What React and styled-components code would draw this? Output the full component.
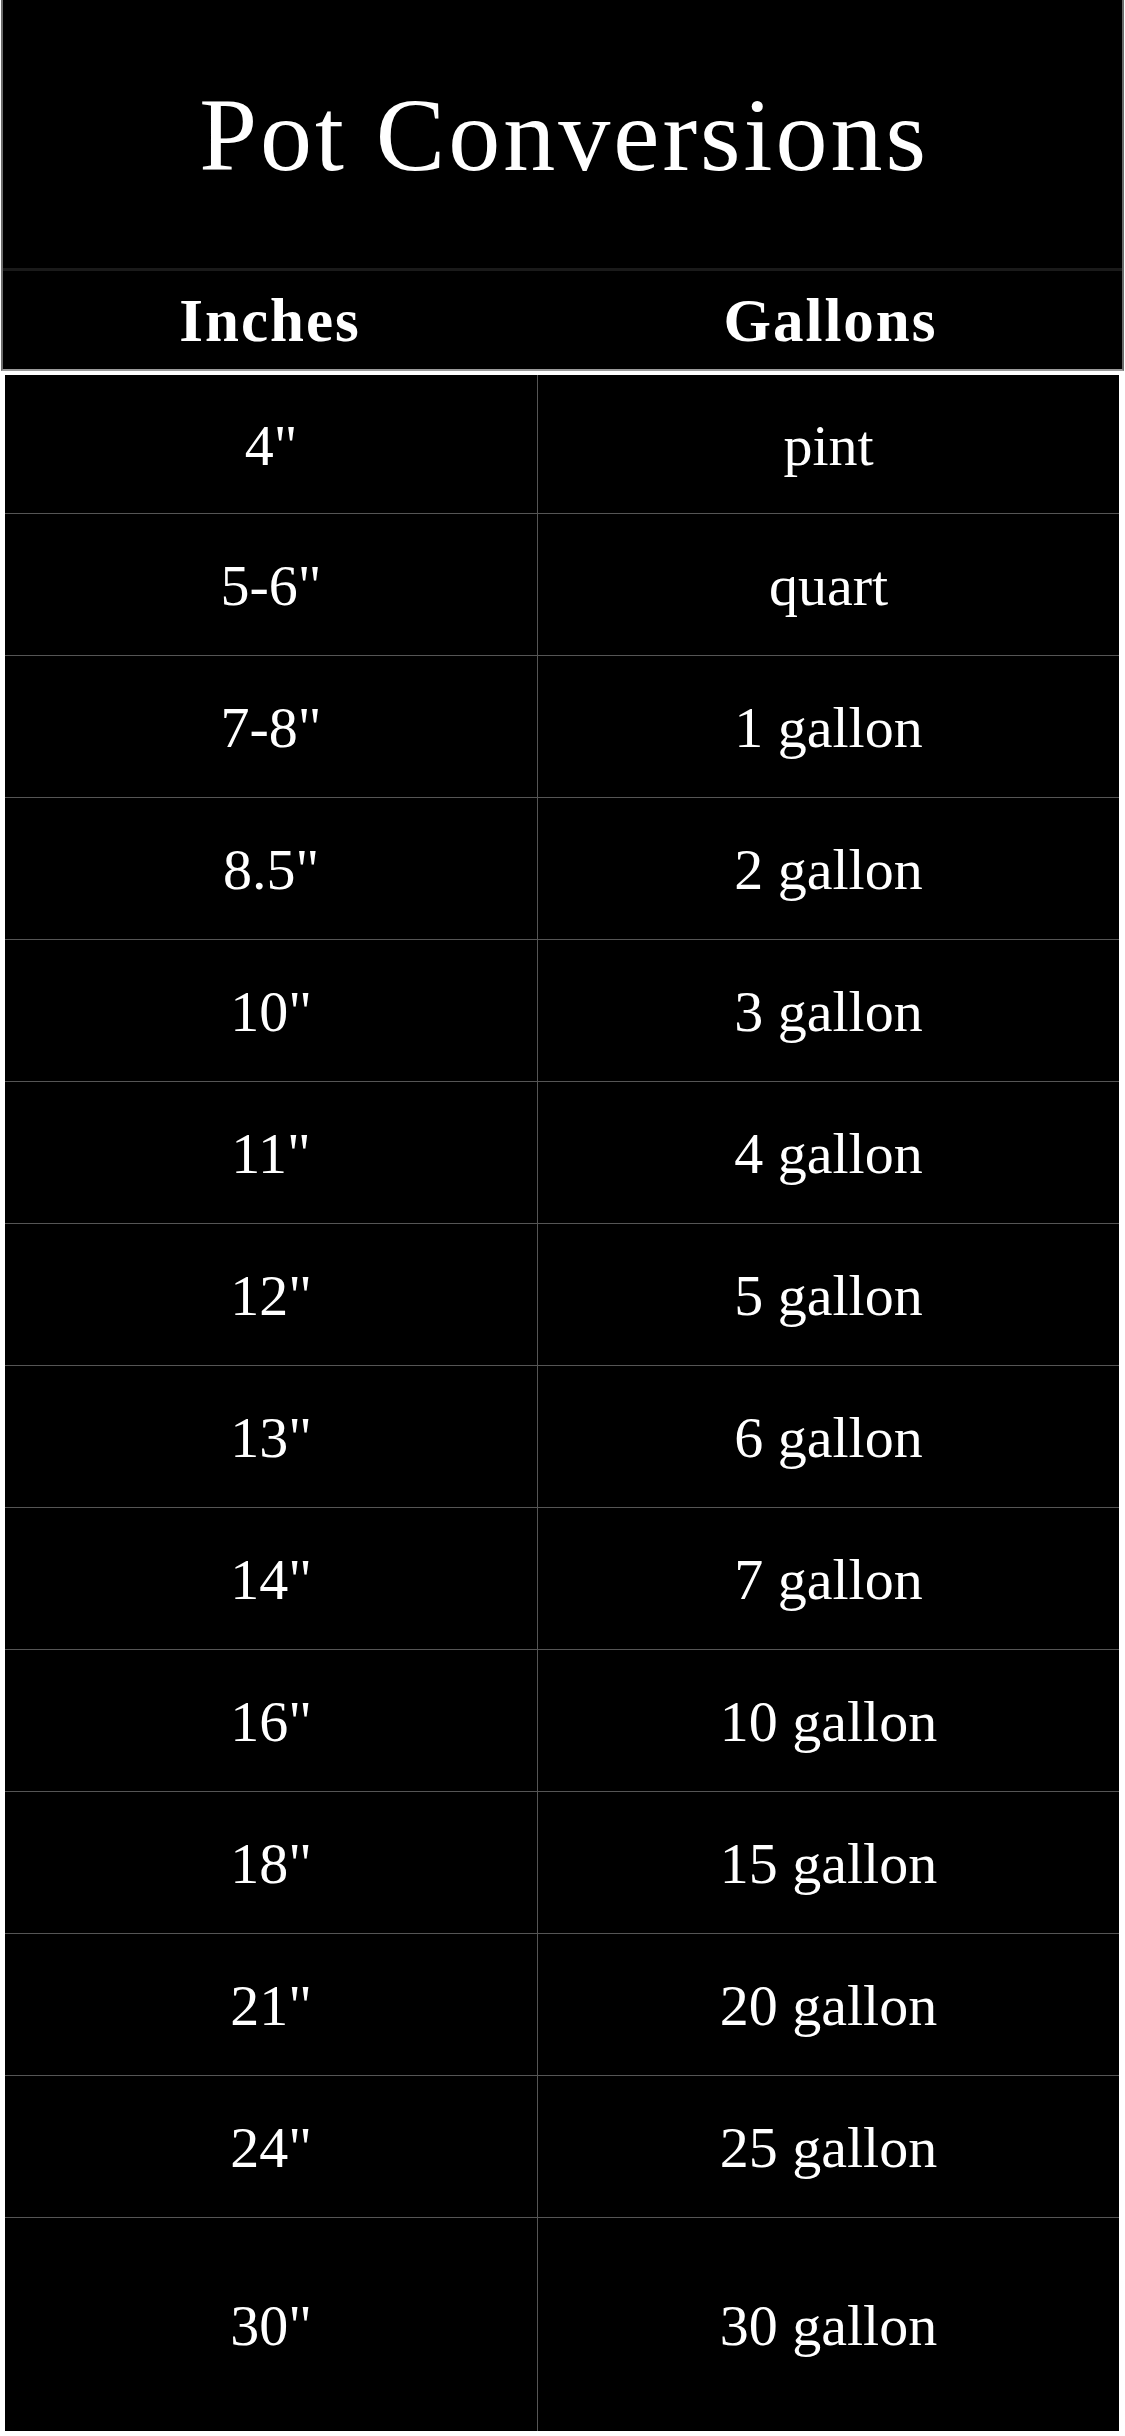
import React from "react";
import styled, { createGlobalStyle } from "styled-components";

const GlobalStyle = createGlobalStyle`
  html, body {
    margin: 0;
    padding: 0;
    background: #ffffff;
  }
  body {
    font-family: "Liberation Serif", "Times New Roman", serif;
  }
  * { box-sizing: border-box; }
`;

const Page = styled.div`
  width: 1125px;
  height: 2436px;
  background: #ffffff;
  overflow: hidden;
`;

const HeaderPanel = styled.header`
  margin: 0 1px;
  background: #000000;
  border-left: 2px solid #6c6c6c;
  border-right: 2px solid #6c6c6c;
  border-bottom: 2px solid #9a9a9a;
`;

const Title = styled.h1`
  margin: 0;
  height: 268px;
  display: flex;
  align-items: center;
  justify-content: center;
  padding: 0 0 0 3px;
  color: #ffffff;
  font-family: "Liberation Serif", "Times New Roman", serif;
  font-weight: 400;
  font-size: 104px;
  letter-spacing: 3px;
`;

const Rule = styled.div`
  height: 3px;
  background: #1a1a1a;
`;

const HeadRow = styled.div`
  display: grid;
  grid-template-columns: 534px 1fr;
  height: 98px;
`;

const HeadCell = styled.div`
  display: flex;
  align-items: center;
  justify-content: center;
  padding-top: 2px;
  color: #ffffff;
  font-family: "Liberation Serif", "Times New Roman", serif;
  font-weight: 700;
  font-size: 61px;
  letter-spacing: 2px;
  padding-left: ${(p) => (p.$right ? "2px" : "0")};
`;

const Body = styled.div`
  margin: 4px 6px 0 5px;
  background: #000000;
`;

const Row = styled.div`
  display: grid;
  grid-template-columns: 533px 1fr;
  height: ${(p) => p.$h}px;
  border-top: ${(p) => (p.$first ? "none" : "1px solid #555555")};
`;

const Cell = styled.div`
  display: flex;
  align-items: center;
  justify-content: center;
  color: #ffffff;
  font-family: "Liberation Serif", "Times New Roman", serif;
  font-size: 58px;
  border-right: ${(p) => (p.$divider ? "1px solid #555555" : "none")};
  padding-top: 2px;
`;

const rows = [
  ['4"', "pint"],
  ['5-6"', "quart"],
  ['7-8"', "1 gallon"],
  ['8.5"', "2 gallon"],
  ['10"', "3 gallon"],
  ['11"', "4 gallon"],
  ['12"', "5 gallon"],
  ['13"', "6 gallon"],
  ['14"', "7 gallon"],
  ['16"', "10 gallon"],
  ['18"', "15 gallon"],
  ['21"', "20 gallon"],
  ['24"', "25 gallon"],
  ['30"', "30 gallon"],
];

export default function App() {
  return (
    <Page>
      <GlobalStyle />
      <HeaderPanel>
        <Title>Pot Conversions</Title>
        <Rule />
        <HeadRow>
          <HeadCell>Inches</HeadCell>
          <HeadCell $right>Gallons</HeadCell>
        </HeadRow>
      </HeaderPanel>
      <Body>
        {rows.map(([inches, gallons], i) => {
          const first = i === 0;
          const last = i === rows.length - 1;
          const h = first ? 138 : last ? 214 : 142;
          return (
            <Row key={inches} $first={first} $h={h}>
              <Cell $divider>{inches}</Cell>
              <Cell>{gallons}</Cell>
            </Row>
          );
        })}
      </Body>
    </Page>
  );
}
